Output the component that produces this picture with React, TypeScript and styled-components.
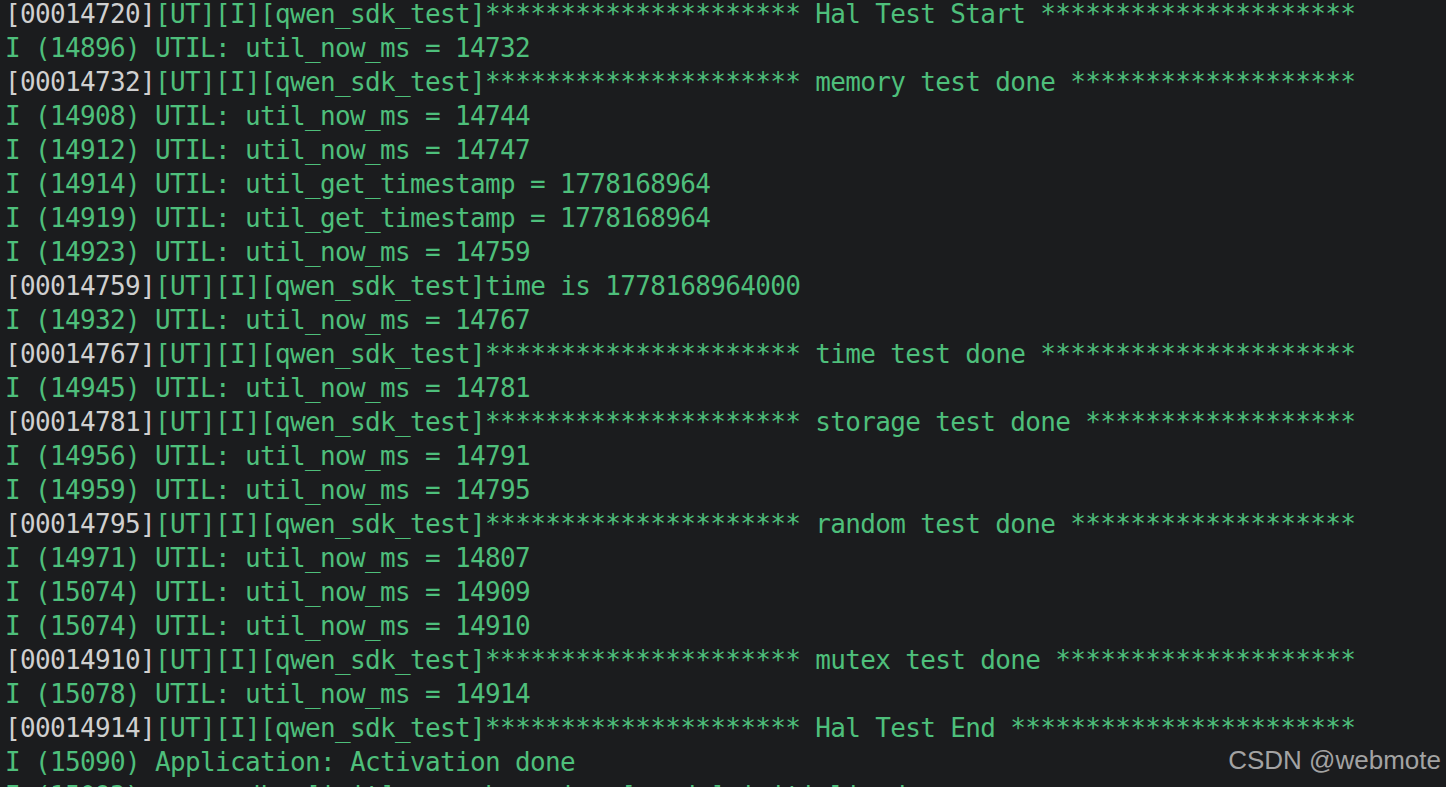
import React from "react";
import styled, { createGlobalStyle } from "styled-components";

const GlobalStyle = createGlobalStyle`
  html, body {
    margin: 0;
    padding: 0;
    background: #1b1c1e;
    overflow: hidden;
  }
`;

const Screen = styled.div`
  position: relative;
  width: 1446px;
  height: 787px;
  overflow: hidden;
  background: #1b1c1e;
`;

const Log = styled.pre`
  margin: 0;
  padding: 0 0 0 5px;
  transform: translateY(-3px);
  font-family: "DejaVu Sans Mono", "Liberation Mono", monospace;
  font-size: 26px;
  letter-spacing: -0.65px;
  line-height: 34px;
  color: #4ebf7b;
  white-space: pre;
`;

const Line = styled.div`
  height: 34px;
`;

const Stamp = styled.span`
  color: #d0d0d0;
`;

const Watermark = styled.div`
  position: absolute;
  right: 5px;
  bottom: 11px;
  font-family: "Liberation Sans", Arial, sans-serif;
  font-size: 26px;
  color: #a3a3a3;
`;

const stars = (n: number) => "*".repeat(n);
const tag = "[UT][I][qwen_sdk_test]";
const banner = (msg: string) => {
  const tail = 90 - 54 - msg.length - 1;
  return `${tag}${stars(21)} ${msg} ${stars(tail)}`;
};

type Entry = { stamp?: string; text: string };

const lines: Entry[] = [
  { stamp: "[00014720]", text: banner("Hal Test Start") },
  { text: "I (14896) UTIL: util_now_ms = 14732" },
  { stamp: "[00014732]", text: banner("memory test done") },
  { text: "I (14908) UTIL: util_now_ms = 14744" },
  { text: "I (14912) UTIL: util_now_ms = 14747" },
  { text: "I (14914) UTIL: util_get_timestamp = 1778168964" },
  { text: "I (14919) UTIL: util_get_timestamp = 1778168964" },
  { text: "I (14923) UTIL: util_now_ms = 14759" },
  { stamp: "[00014759]", text: `${tag}time is 1778168964000` },
  { text: "I (14932) UTIL: util_now_ms = 14767" },
  { stamp: "[00014767]", text: banner("time test done") },
  { text: "I (14945) UTIL: util_now_ms = 14781" },
  { stamp: "[00014781]", text: banner("storage test done") },
  { text: "I (14956) UTIL: util_now_ms = 14791" },
  { text: "I (14959) UTIL: util_now_ms = 14795" },
  { stamp: "[00014795]", text: banner("random test done") },
  { text: "I (14971) UTIL: util_now_ms = 14807" },
  { text: "I (15074) UTIL: util_now_ms = 14909" },
  { text: "I (15074) UTIL: util_now_ms = 14910" },
  { stamp: "[00014910]", text: banner("mutex test done") },
  { text: "I (15078) UTIL: util_now_ms = 14914" },
  { stamp: "[00014914]", text: banner("Hal Test End") },
  { text: "I (15090) Application: Activation done" },
  { text: "I (15093) qwen_sdk: [init] speech engine [ready] initialized" },
];

export default function App() {
  return (
    <Screen>
      <GlobalStyle />
      <Log>
        {lines.map((l, i) => (
          <Line key={i}>
            {l.stamp && <Stamp>{l.stamp}</Stamp>}
            {l.text}
          </Line>
        ))}
      </Log>
      <Watermark>CSDN @webmote</Watermark>
    </Screen>
  );
}
